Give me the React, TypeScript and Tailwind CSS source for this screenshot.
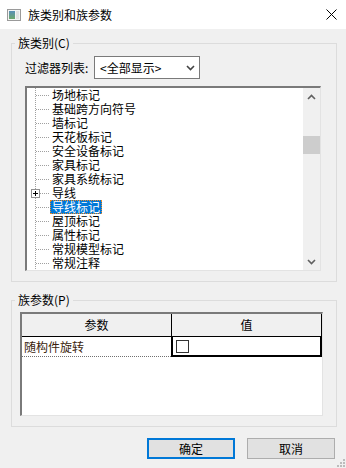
import React, { FC } from "react";

const treeItems: string[] = [
	"场地标记",
	"基础跨方向符号",
	"墙标记",
	"天花板标记",
	"安全设备标记",
	"家具标记",
	"家具系统标记",
	"导线",
	"导线标记",
	"屋顶标记",
	"属性标记",
	"常规模型标记",
	"常规注释",
];

/** little window icon in the caption */
const WindowIcon: FC = () => (
	<svg width="14" height="12" viewBox="0 0 14 12" className="shrink-0">
		<defs>
			<linearGradient id="wg" x1="0" y1="0" x2="0" y2="1">
				<stop offset="0" stopColor="#5a8fb8" />
				<stop offset="1" stopColor="#6ea86a" />
			</linearGradient>
		</defs>
		<rect x="0.5" y="0.5" width="13" height="11" fill="#f4f4f4" stroke="#9a9a9a" />
		<rect x="2" y="2" width="6" height="8" fill="url(#wg)" />
		<rect x="9" y="2" width="3" height="8" fill="#e2e2e2" />
	</svg>
);

/** dotted tree connectors, drawn per row so the vertical line joins up */
const Connector: FC<{ expandable?: boolean }> = ({ expandable }) => (
	<svg width="23" height="14" className="shrink-0">
		{!expandable && <line x1="8.5" y1="0" x2="8.5" y2="14" stroke="#a0a0a0" strokeDasharray="1 1" />}
		{expandable && (
			<>
				<line x1="8.5" y1="0" x2="8.5" y2="3" stroke="#a0a0a0" strokeDasharray="1 1" />
				<line x1="8.5" y1="12" x2="8.5" y2="14" stroke="#a0a0a0" strokeDasharray="1 1" />
				<rect x="4.5" y="3.5" width="8" height="8" fill="#fff" stroke="#919191" />
				<line x1="6" y1="7.5" x2="11" y2="7.5" stroke="#000" />
				<line x1="8.5" y1="5" x2="8.5" y2="10" stroke="#000" />
			</>
		)}
		<line x1={expandable ? 13 : 9} y1="7.5" x2="23" y2="7.5" stroke="#a0a0a0" strokeDasharray="1 1" />
	</svg>
);

const Chevron: FC<{ up?: boolean; color?: string }> = ({ up, color = "#606060" }) => (
	<svg width="9" height="6" viewBox="0 0 9 6">
		<polyline
			points={up ? "1,5 4.5,1.5 8,5" : "1,1 4.5,4.5 8,1"}
			fill="none"
			stroke={color}
			strokeWidth="1.6"
		/>
	</svg>
);

export default function App() {
	return (
		<div className="relative w-[346px] h-[468px] bg-[#f0f0f0] flex flex-col text-[12px] leading-[14px] text-black font-['Noto_Sans_CJK_SC','Noto_Sans',sans-serif] overflow-hidden">
			{/* caption */}
			<div className="h-[29px] bg-white flex items-center pl-[7px] pr-[9px] shrink-0">
				<WindowIcon />
				<span className="ml-[7px] text-[12px]">族类别和族参数</span>
				<div className="flex-1" />
				<svg width="11" height="11" viewBox="0 0 11 11">
					<path d="M0.5 0.5 L10.5 10.5 M10.5 0.5 L0.5 10.5" stroke="#000" strokeWidth="1" />
				</svg>
			</div>

			{/* family category */}
			<fieldset className="mt-[7px] mx-[9px] ml-[11px] w-[326px] border border-[#dcdcdc] pb-[10px]">
				<legend className="ml-[3px] px-[3px] leading-[14px]">族类别(C)</legend>

				<div className="flex items-center mt-[6px] pl-[13px]">
					<span className="w-[69px]">过滤器列表:</span>
					<div className="w-[106px] h-[23px] bg-white border border-[#7a7a7a] flex items-center pl-[5px] pr-[4px]">
						<span className="flex-1">&lt;全部显示&gt;</span>
						<Chevron color="#444" />
					</div>
				</div>

				<div className="mt-[7px] ml-[13px] w-[296px] h-[185px] flex bg-white border-t-2 border-l-2 border-t-[#7a7a7a] border-l-[#7a7a7a] border-r border-b border-r-[#e3e3e3] border-b-[#e3e3e3] overflow-hidden">
					<div className="flex-1 flex flex-col">
						{treeItems.map((item) => {
							const selected = item === "导线标记";
							return (
								<div key={item} className="h-[14px] flex items-center shrink-0">
									<Connector expandable={item === "导线"} />
									<span
										className={
											selected
												? "h-[14px] px-[1px] border border-dotted border-[#f08a24] bg-[#0078d7] text-white leading-[12px]"
												: "h-[14px] px-[1px] border border-transparent leading-[12px]"
										}
									>
										{item}
									</span>
								</div>
							);
						})}
					</div>
					<div className="w-[17px] bg-[#f0f0f0] flex flex-col">
						<div className="h-[17px] flex items-center justify-center">
							<Chevron up />
						</div>
						<div className="mt-[31px] h-[18px] bg-[#cdcdcd]" />
						<div className="flex-1" />
						<div className="h-[17px] flex items-center justify-center">
							<Chevron />
						</div>
					</div>
				</div>
			</fieldset>

			{/* family parameters */}
			<fieldset className="mt-[11px] ml-[11px] w-[326px] h-[134px] border border-[#dcdcdc]">
				<legend className="ml-[3px] px-[3px] leading-[14px]">族参数(P)</legend>

				<div className="mt-[5px] ml-[8px] w-[303px] h-[104px] bg-white border-t-2 border-l-2 border-t-[#7a7a7a] border-l-[#7a7a7a] border-r border-b border-r-[#e3e3e3] border-b-[#e3e3e3] flex flex-col">
					<div className="h-[23px] flex bg-[#f0f0f0] border-b border-black">
						<div className="w-[150px] flex items-center justify-center border-r border-black">参数</div>
						<div className="w-[150px] flex items-center justify-center border-r border-black">值</div>
					</div>
					<div className="h-[20px] flex">
						<div className="w-[149px] flex items-center pl-[2px] border-b border-dotted border-[#707070] text-[#3a1e0c]">
							随构件旋转
						</div>
						<div className="w-[152px] flex items-center pl-[3px] border-2 border-black border-t-0">
							<div className="w-[13px] h-[13px] border border-[#333] bg-white" />
						</div>
					</div>
				</div>
			</fieldset>

			{/* buttons */}
			<div className="mt-[11px] flex justify-end gap-[12px] pr-[11px]">
				<button className="w-[88px] h-[21px] bg-[#e1e1e1] border-2 border-[#0078d7] flex items-center justify-center">
					确定
				</button>
				<button className="w-[88px] h-[21px] bg-[#e1e1e1] border border-[#adadad] flex items-center justify-center">
					取消
				</button>
			</div>

			{/* size grip */}
			<svg width="9" height="9" viewBox="0 0 9 9" className="absolute right-[1px] bottom-[1px]">
				{[
					[7, 1],
					[4, 4],
					[7, 4],
					[1, 7],
					[4, 7],
					[7, 7],
				].map(([x, y]) => (
					<rect key={`${x}-${y}`} x={x} y={y} width="2" height="2" fill="#bcbcbc" />
				))}
			</svg>
		</div>
	);
}
